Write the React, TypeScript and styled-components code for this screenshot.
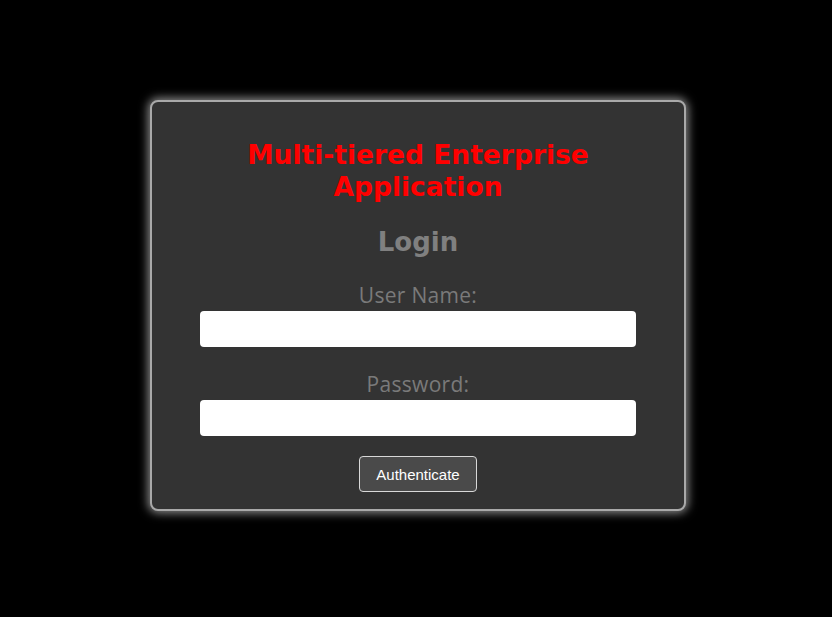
import React from "react";
import styled, { createGlobalStyle } from "styled-components";

const GlobalStyle = createGlobalStyle`
  html, body {
    margin: 0;
    padding: 0;
    background: #000;
  }
  body {
    font-family: "Open Sans", "Noto Sans", sans-serif;
  }
`;

const Page = styled.div`
  width: 832px;
  height: 617px;
  background: #000;
  display: flex;
  justify-content: center;
  align-items: flex-start;
  padding: 100px 0 0 4px;
  box-sizing: border-box;
`;

const Card = styled.form`
  width: 536px;
  box-sizing: border-box;
  background: #333;
  border: 2px solid #a9a9a9;
  border-radius: 8px;
  box-shadow: 0 0 10px 2px rgba(255, 255, 255, 0.55);
  display: flex;
  flex-direction: column;
  align-items: center;
  padding: 37px 48px 17px;
`;

const Title = styled.h1`
  margin: 0;
  color: #ff0000;
  font-family: Verdana, "DejaVu Sans", sans-serif;
  font-weight: bold;
  font-size: 26.5px;
  line-height: 32px;
  text-align: center;
`;

const Heading = styled.h2`
  margin: 24px 0 0;
  color: #808080;
  font-family: Verdana, "DejaVu Sans", sans-serif;
  font-weight: bold;
  font-size: 26px;
  line-height: 30px;
`;

const Label = styled.label<{ $first?: boolean }>`
  margin-top: ${(p) => (p.$first ? "26px" : "25px")};
  color: #7a7a7a;
  font-family: "Open Sans", "Noto Sans", sans-serif;
  font-size: 21px;
  letter-spacing: 0.3px;
  line-height: 24px;
`;

const Input = styled.input`
  margin-top: 4px;
  width: 436px;
  height: 36px;
  box-sizing: border-box;
  border: none;
  border-radius: 4px;
  background: #fff;
  padding: 0 10px;
  font-size: 16px;
  outline: none;
`;

const Button = styled.button`
  margin-top: 20px;
  width: 118px;
  height: 36px;
  box-sizing: border-box;
  background: #4a4a4a;
  color: #fff;
  border: 1px solid #d8d8d8;
  border-radius: 4px;
  font-family: Arial, "Liberation Sans", sans-serif;
  font-size: 15px;
  cursor: pointer;
`;

export default function App() {
  return (
    <>
      <GlobalStyle />
      <Page>
        <Card onSubmit={(e) => e.preventDefault()}>
          <Title>
            Multi-tiered Enterprise
            <br />
            Application
          </Title>
          <Heading>Login</Heading>
          <Label $first htmlFor="user">
            User Name:
          </Label>
          <Input id="user" type="text" />
          <Label htmlFor="pass">Password:</Label>
          <Input id="pass" type="password" />
          <Button type="submit">Authenticate</Button>
        </Card>
      </Page>
    </>
  );
}
